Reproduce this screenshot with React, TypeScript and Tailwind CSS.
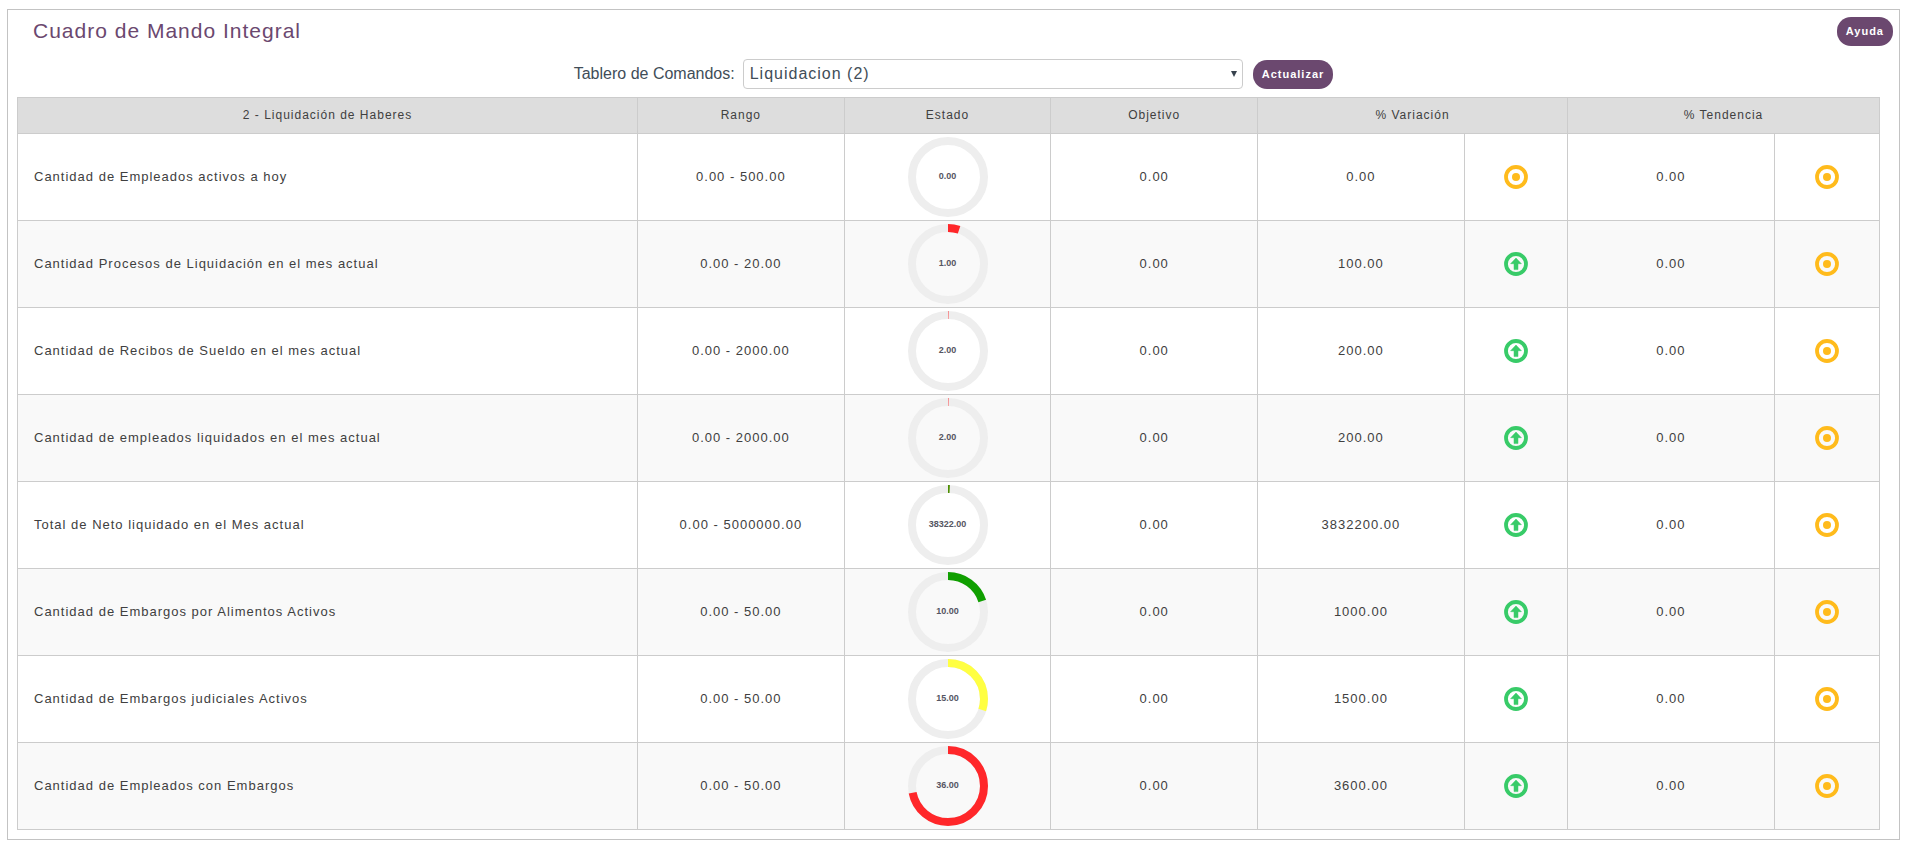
import React from 'react';

type Trend = 'up' | 'flat';

interface Indicator {
  name: string;
  range: string;
  value: string;
  percent: number;
  color: string;
  target: string;
  variation: string;
  variationTrend: Trend;
  tendency: string;
  tendencyTrend: Trend;
}

const RED = '#ff272a';
const GREEN = '#109f00';
const YELLOW = '#ffff42';

const indicators: Indicator[] = [
  { name: 'Cantidad de Empleados activos a hoy', range: '0.00 - 500.00', value: '0.00', percent: 0, color: RED, target: '0.00', variation: '0.00', variationTrend: 'flat', tendency: '0.00', tendencyTrend: 'flat' },
  { name: 'Cantidad Procesos de Liquidación en el mes actual', range: '0.00 - 20.00', value: '1.00', percent: 5, color: RED, target: '0.00', variation: '100.00', variationTrend: 'up', tendency: '0.00', tendencyTrend: 'flat' },
  { name: 'Cantidad de Recibos de Sueldo en el mes actual', range: '0.00 - 2000.00', value: '2.00', percent: 0.1, color: RED, target: '0.00', variation: '200.00', variationTrend: 'up', tendency: '0.00', tendencyTrend: 'flat' },
  { name: 'Cantidad de empleados liquidados en el mes actual', range: '0.00 - 2000.00', value: '2.00', percent: 0.1, color: RED, target: '0.00', variation: '200.00', variationTrend: 'up', tendency: '0.00', tendencyTrend: 'flat' },
  { name: 'Total de Neto liquidado en el Mes actual', range: '0.00 - 5000000.00', value: '38322.00', percent: 0.77, color: '#4d8f00', target: '0.00', variation: '3832200.00', variationTrend: 'up', tendency: '0.00', tendencyTrend: 'flat' },
  { name: 'Cantidad de Embargos por Alimentos Activos', range: '0.00 - 50.00', value: '10.00', percent: 20, color: GREEN, target: '0.00', variation: '1000.00', variationTrend: 'up', tendency: '0.00', tendencyTrend: 'flat' },
  { name: 'Cantidad de Embargos judiciales Activos', range: '0.00 - 50.00', value: '15.00', percent: 30, color: YELLOW, target: '0.00', variation: '1500.00', variationTrend: 'up', tendency: '0.00', tendencyTrend: 'flat' },
  { name: 'Cantidad de Empleados con Embargos', range: '0.00 - 50.00', value: '36.00', percent: 72, color: RED, target: '0.00', variation: '3600.00', variationTrend: 'up', tendency: '0.00', tendencyTrend: 'flat' },
];

const Gauge: React.FC<{ value: string; percent: number; color: string }> = ({ value, percent, color }) => (
  <div className="mx-auto grid size-20 place-items-center">
    <svg viewBox="0 0 80 80" className="col-start-1 row-start-1 size-20" fill="none" strokeWidth={8}>
      <circle cx={40} cy={40} r={36} stroke="#eeeeee" />
      {percent > 0 && (
        <circle
          cx={40}
          cy={40}
          r={36}
          stroke={color}
          pathLength={100}
          strokeDasharray={`${percent} 100`}
          transform="rotate(-90 40 40)"
        />
      )}
    </svg>
    <span className="col-start-1 row-start-1 pb-0.5 text-[9px] leading-none font-bold tracking-normal text-[#555562]">
      {value}
    </span>
  </div>
);

const TrendIcon: React.FC<{ trend: Trend }> = ({ trend }) => (
  <svg viewBox="0 0 24 24" className="mx-auto block size-6" aria-hidden="true">
    {trend === 'up' ? (
      <>
        <circle cx={12} cy={12} r={10} fill="none" stroke="#38cb68" strokeWidth={3.8} />
        <path d="M12 6 17.4 11.7H14V17.6H10V11.7H6.6Z" fill="#38cb68" stroke="#38cb68" strokeWidth={0.5} strokeLinejoin="round" />
      </>
    ) : (
      <>
        <circle cx={12} cy={12} r={10} fill="none" stroke="#ffbb1c" strokeWidth={3.8} />
        <circle cx={12} cy={12} r={4} fill="#ffbb1c" />
      </>
    )}
  </svg>
);

const Button: React.FC<{ children: React.ReactNode }> = ({ children }) => (
  <button
    type="button"
    className="h-[29px] shrink-0 cursor-pointer rounded-[14px] bg-[#6b486f] px-[9px] text-[11px] font-bold tracking-[1px] text-white hover:bg-[#5a3b5e]"
  >
    {children}
  </button>
);

const th = 'border border-[#cccccc] px-4 pb-0.5 text-center font-normal';
const td = 'border border-[#cccccc] p-0 text-center';

export default function App() {
  return (
    <div className="pt-[9px] pr-1.5 pb-1.5 pl-[7px] font-['Liberation_Sans',Arial,sans-serif]">
      <main className="border border-[#c3c3c3] bg-white pt-[7px] pb-[9px]">
        <header className="flex items-start justify-between pr-1.5 pl-[25px]">
          <h1 className="text-[21px] leading-7 tracking-[1px] text-[#6b486f]">Cuadro de Mando Integral</h1>
          <Button>Ayuda</Button>
        </header>

        <div className="mt-[13px] flex items-end justify-center">
          <label htmlFor="tablero" className="mr-2 text-base leading-[30px] text-[#414d58]">
            Tablero de Comandos:
          </label>
          <div className="relative mr-2.5">
            <select
              id="tablero"
              defaultValue="2"
              className="block h-[30px] w-[500px] appearance-none rounded border border-[#cccccc] bg-white px-1.5 text-base leading-none tracking-[1px] text-[#414d58]"
            >
              <option value="2">Liquidacion (2)</option>
            </select>
            <svg viewBox="0 0 6 6" className="pointer-events-none absolute top-3 right-1.5 size-1.5" aria-hidden="true">
              <path d="M0 0H6L3 6Z" fill="#37424d" />
            </svg>
          </div>
          <Button>Actualizar</Button>
        </div>

        <div className="mt-2 pr-[19px] pl-[9px]">
          <table className="w-full table-fixed border-collapse text-[#404040]">
            <colgroup>
              <col className="w-[33.3%]" />
              <col className="w-[11.1%]" />
              <col className="w-[11.1%]" />
              <col className="w-[11.1%]" />
              <col className="w-[11.1%]" />
              <col className="w-[5.55%]" />
              <col className="w-[11.1%]" />
              <col />
            </colgroup>
            <thead className="bg-[#dddddd] text-[12px] tracking-[1px]">
              <tr className="h-9">
                <th scope="col" className={th}>2 - Liquidación de Haberes</th>
                <th scope="col" className={th}>Rango</th>
                <th scope="col" className={th}>Estado</th>
                <th scope="col" className={th}>Objetivo</th>
                <th scope="col" colSpan={2} className={th}>% Variación</th>
                <th scope="col" colSpan={2} className={th}>% Tendencia</th>
              </tr>
            </thead>
            <tbody className="text-[13px] tracking-[1px]">
              {indicators.map((item) => (
                <tr key={item.name} className="h-[87px] even:bg-[#f9f9f9]">
                  <td className="border border-[#cccccc] px-4 text-left">{item.name}</td>
                  <td className={td}>{item.range}</td>
                  <td className={td}>
                    {/* keep a sliver visible for values close to zero */}
                    <Gauge value={item.value} percent={item.percent && Math.max(item.percent, 0.2)} color={item.color} />
                  </td>
                  <td className={td}>{item.target}</td>
                  <td className={td}>{item.variation}</td>
                  <td className={td}>
                    <TrendIcon trend={item.variationTrend} />
                  </td>
                  <td className={td}>{item.tendency}</td>
                  <td className={td}>
                    <TrendIcon trend={item.tendencyTrend} />
                  </td>
                </tr>
              ))}
            </tbody>
          </table>
        </div>
      </main>
    </div>
  );
}
